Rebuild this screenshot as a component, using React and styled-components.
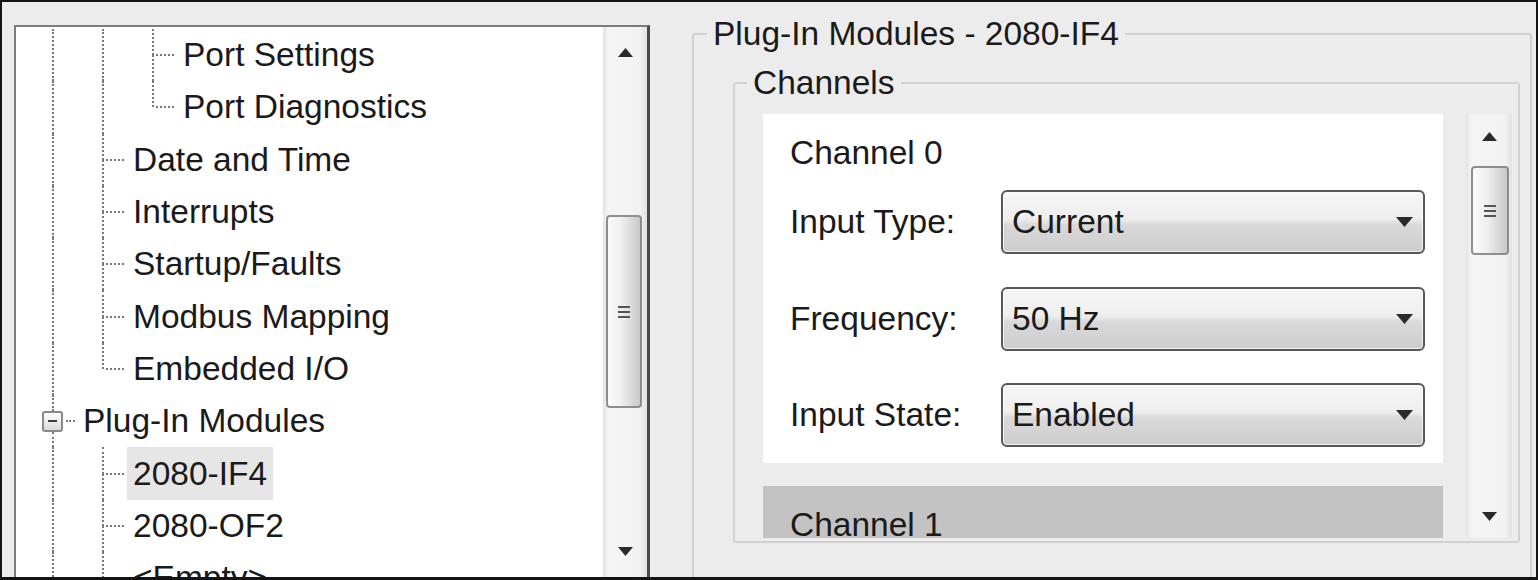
import React from 'react';
import styled, { createGlobalStyle } from 'styled-components';

const GlobalStyle = createGlobalStyle`
  html, body {
    margin: 0;
    padding: 0;
    background: #ececec;
  }
  body {
    font-family: "Liberation Sans", Arial, sans-serif;
    font-size: 33.5px;
    color: #1a1a1a;
  }
`;

const Frame = styled.div`
  width: 1538px;
  height: 580px;
  box-sizing: border-box;
  border: 2px solid #141414;
  border-bottom-width: 3px;
  background: #ececec;
  display: flex;
  overflow: hidden;
`;

/* ---------- tree ---------- */

const TreePanel = styled.div`
  width: 636px;
  flex-shrink: 0;
  margin: 23px 0 0 12px;
  box-sizing: border-box;
  display: flex;
  background: #fff;
  border-top: 2px solid #7c7c7c;
  border-left: 2px solid #7c7c7c;
  border-right: 3px solid #4a4a4a;
`;

const TreeList = styled.div`
  flex: 1;
  padding: 2px 0 0 12px;
  overflow: hidden;
`;

const Row = styled.div`
  height: 52.3px;
  display: flex;
  align-items: stretch;
  white-space: nowrap;
`;

const Guide = styled.span`
  width: 50px;
  flex-shrink: 0;
  display: flex;
`;

const VLine = styled.span`
  margin-left: 24px;
  border-left: 2px dotted ${({ $show }) => ($show ? '#7a7a7a' : 'transparent')};
`;

const Connector = styled.span`
  width: 50px;
  flex-shrink: 0;
  display: grid;
  grid-template-columns: 24px 2px 20px 4px;
  grid-template-rows: 1fr 1fr;
`;

const Stem = styled.span`
  grid-column: 2;
  grid-row: ${({ $row }) => $row};
  border-left: 2px dotted ${({ $show }) => ($show ? '#7a7a7a' : 'transparent')};
`;

const Branch = styled.span`
  grid-column: 3;
  grid-row: 1 / span 2;
  align-self: center;
  border-top: 2px dotted #7a7a7a;
  margin-left: 2px;
`;

const ExpanderCell = styled.span`
  width: 50px;
  flex-shrink: 0;
  display: grid;
  grid-template-columns: 14px 21px 12px 3px;
  grid-template-rows: 1fr 21px 1fr;
`;

const ExpStem = styled.span`
  grid-column: 2;
  grid-row: ${({ $row }) => $row};
  justify-self: center;
  border-left: 2px dotted #7a7a7a;
`;

const ExpBox = styled.span`
  grid-column: 2;
  grid-row: 2;
  box-sizing: border-box;
  border: 2px solid #8a8a8a;
  border-radius: 3px;
  background: linear-gradient(to bottom, #ffffff, #dcdcdc);
  display: flex;
  align-items: center;
  justify-content: center;

  &::after {
    content: '';
    width: 9px;
    height: 2px;
    background: #3c3c3c;
  }
`;

const ExpBranch = styled.span`
  grid-column: 3;
  grid-row: 2;
  align-self: center;
  border-top: 2px dotted #7a7a7a;
  margin-left: 3px;
`;

const NodeLabel = styled.span`
  display: flex;
  align-items: center;
  margin-left: -1px;
  padding: 0 6px;
  background: ${({ $selected }) => ($selected ? '#e6e6e6' : 'transparent')};
`;

/* ---------- scrollbars ---------- */

const Scrollbar = styled.div`
  width: ${({ $width }) => $width}px;
  flex-shrink: 0;
  display: flex;
  flex-direction: column;
  background: linear-gradient(to right, #e4e4e4 0%, #f5f5f5 12%, #f2f2f2 85%, #e2e2e2 100%);
  padding-bottom: ${({ $bottom }) => $bottom || 0}px;
`;

const ArrowButton = styled.div`
  height: ${({ $size }) => $size}px;
  flex-shrink: 0;
  display: flex;
  align-items: center;
  justify-content: center;
`;

const Track = styled.div`
  flex: 1;
  display: flex;
  flex-direction: column;
`;

const Thumb = styled.div`
  margin-top: ${({ $top }) => $top}px;
  margin-left: ${({ $left }) => $left}px;
  width: ${({ $width }) => $width}px;
  height: ${({ $height }) => $height}px;
  box-sizing: border-box;
  border: 2px solid #8e8e8e;
  border-radius: 4px;
  background: linear-gradient(to right, #fbfbfb 0%, #efefef 40%, #d9d9d9 75%, #c9c9c9 100%);
  display: flex;
  flex-direction: column;
  align-items: center;
  justify-content: center;
  gap: 3px;
`;

const GripLine = styled.span`
  width: 12px;
  height: 2px;
  background: #555;
`;

function Arrow({ down, size = 15 }) {
  const h = Math.round(size * 0.6);
  return (
    <svg width={size} height={h} viewBox={`0 0 ${size} ${h}`}>
      <polygon
        points={down ? `0,0 ${size},0 ${size / 2},${h}` : `0,${h} ${size},${h} ${size / 2},0`}
        fill="#2a2a2a"
      />
    </svg>
  );
}

function ScrollBar({ width, button, thumb, bottom }) {
  return (
    <Scrollbar $width={width} $bottom={bottom}>
      <ArrowButton $size={button}>
        <Arrow />
      </ArrowButton>
      <Track>
        <Thumb $top={thumb.top} $left={thumb.left} $width={thumb.width} $height={thumb.height}>
          <GripLine />
          <GripLine />
          <GripLine />
        </Thumb>
      </Track>
      <ArrowButton $size={button}>
        <Arrow down />
      </ArrowButton>
    </Scrollbar>
  );
}

/* ---------- right side ---------- */

const RightPane = styled.div`
  flex: 1;
  min-width: 0;
  padding: 12px 4px 0 42px;
  display: flex;
  flex-direction: column;
`;

const GroupBox = styled.fieldset`
  margin: 0;
  padding: 0;
  min-width: 0;
  border: 2px solid #d2d2d2;
  border-radius: 3px;
  display: flex;
  flex-direction: column;
`;

const OuterGroup = styled(GroupBox)`
  flex: 1;
  margin-bottom: -14px;
`;

const ChannelsGroup = styled(GroupBox)`
  margin: 9px 10px 0 39px;
`;

const Legend = styled.legend`
  margin-left: ${({ $indent }) => $indent}px;
  padding: 0 6px;
  line-height: 40px;
  white-space: nowrap;
`;

const Viewport = styled.div`
  height: 424px;
  margin: 11px 6px 3px 28px;
  display: flex;
  gap: 23px;
`;

const CardList = styled.div`
  flex: 1;
  min-width: 0;
  overflow: hidden;
  display: flex;
  flex-direction: column;
  gap: 23px;
`;

const Card = styled.div`
  flex-shrink: 0;
  background: #fff;
  padding: 19px 18px 16px 27px;
`;

const CardTitle = styled.div`
  line-height: 40px;
  margin-bottom: 17px;
`;

const Fields = styled.div`
  display: flex;
  flex-direction: column;
  gap: 32.5px;
`;

const FieldRow = styled.div`
  display: grid;
  grid-template-columns: 211px 1fr;
  align-items: center;
  height: 64px;
`;

const Select = styled.div`
  height: 64px;
  box-sizing: border-box;
  border: 2px solid #585858;
  border-radius: 6px;
  padding: 0 10px 0 9px;
  display: flex;
  align-items: center;
  justify-content: space-between;
  background: linear-gradient(to bottom, #f7f7f7 0%, #eeeeee 45%, #d9d9d9 55%, #cdcdcd 100%);
  box-shadow: inset 0 0 0 1px rgba(255, 255, 255, 0.75);
`;

const CollapsedHeader = styled.div`
  flex-shrink: 0;
  background: #c3c3c3;
  padding: 19px 27px;
  line-height: 40px;
`;

const treeRows = [
  { level: 2, text: 'Port Settings', guides: [true, true] },
  { level: 2, text: 'Port Diagnostics', guides: [true, true], last: true },
  { level: 1, text: 'Date and Time', guides: [true] },
  { level: 1, text: 'Interrupts', guides: [true] },
  { level: 1, text: 'Startup/Faults', guides: [true] },
  { level: 1, text: 'Modbus Mapping', guides: [true] },
  { level: 1, text: 'Embedded I/O', guides: [true], last: true },
  { level: 0, text: 'Plug-In Modules', guides: [], expander: true },
  { level: 1, text: '2080-IF4', guides: [true], selected: true },
  { level: 1, text: '2080-OF2', guides: [true] },
  { level: 1, text: '<Empty>', guides: [true] },
];

const fields = [
  { label: 'Input Type:', value: 'Current' },
  { label: 'Frequency:', value: '50 Hz' },
  { label: 'Input State:', value: 'Enabled' },
];

function TreeRow({ row }) {
  return (
    <Row>
      {row.guides.map((show, i) => (
        <Guide key={i}>
          <VLine $show={show} />
        </Guide>
      ))}
      {row.expander ? (
        <ExpanderCell>
          <ExpStem $row={1} />
          <ExpBox />
          <ExpBranch />
          <ExpStem $row={3} />
        </ExpanderCell>
      ) : (
        <Connector>
          <Stem $show $row={1} />
          <Stem $show={!row.last} $row={2} />
          <Branch />
        </Connector>
      )}
      <NodeLabel $selected={row.selected}>{row.text}</NodeLabel>
    </Row>
  );
}

export default function App() {
  return (
    <>
      <GlobalStyle />
      <Frame>
        <TreePanel>
          <TreeList>
            {treeRows.map((row) => (
              <TreeRow key={row.text} row={row} />
            ))}
          </TreeList>
          <ScrollBar
            width={44}
            button={50}
            bottom={1}
            thumb={{ top: 138, left: 3, width: 36, height: 193 }}
          />
        </TreePanel>

        <RightPane>
          <OuterGroup>
            <Legend $indent={13}>Plug-In Modules - 2080-IF4</Legend>
            <ChannelsGroup>
              <Legend $indent={12}>Channels</Legend>
              <Viewport>
                <CardList>
                  <Card>
                    <CardTitle>Channel 0</CardTitle>
                    <Fields>
                      {fields.map((f) => (
                        <FieldRow key={f.label}>
                          <span>{f.label}</span>
                          <Select>
                            <span>{f.value}</span>
                            <Arrow down size={17} />
                          </Select>
                        </FieldRow>
                      ))}
                    </Fields>
                  </Card>
                  <CollapsedHeader>Channel 1</CollapsedHeader>
                </CardList>
                <ScrollBar
                  width={46}
                  button={44}
                  thumb={{ top: 8, left: 5, width: 38, height: 89 }}
                />
              </Viewport>
            </ChannelsGroup>
          </OuterGroup>
        </RightPane>
      </Frame>
    </>
  );
}
